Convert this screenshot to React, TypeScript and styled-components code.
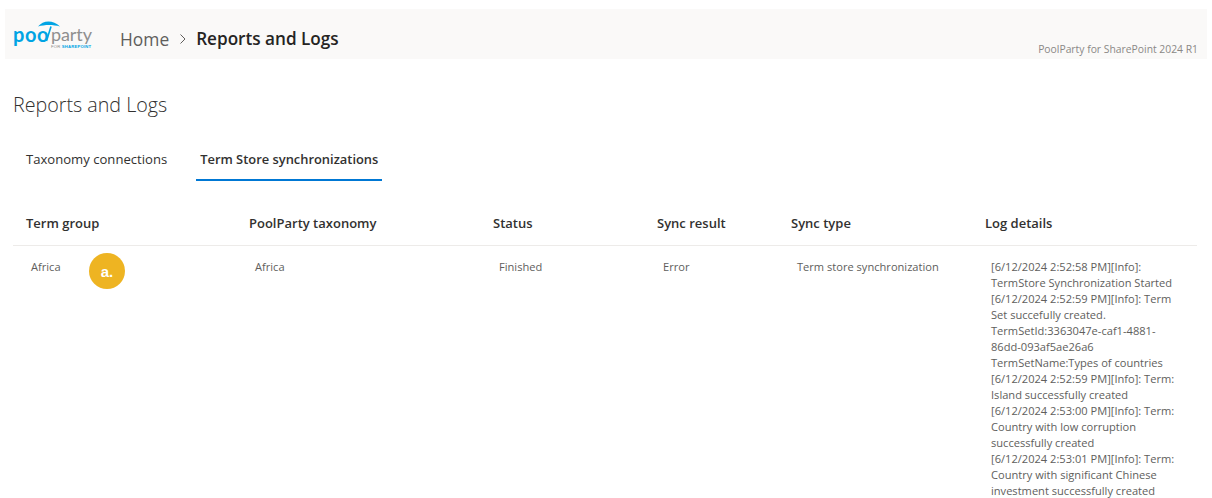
import React from "react";
import styled, { createGlobalStyle } from "styled-components";

const Global = createGlobalStyle`
  html, body { margin: 0; padding: 0; background: #fff; overflow: hidden; }
  body { font-family: "Open Sans", "Noto Sans", sans-serif; color: #323130; }
`;
const Page = styled.div`
  width: 1212px; height: 498px; overflow: hidden; padding: 9px 5px 0; box-sizing: border-box;
`;
const Header = styled.header`
  height: 50px; background: #faf9f8; display: flex; align-items: center; position: relative; padding-left: 8px;
`;
const Logo = styled.div`
  width: 78px; height: 36px; position: relative; flex: none;
`;
const LogoWord = styled.span<{ $c: string; $l: number; $s: number; $ls: number; $w: number }>`
  position: absolute; top: 8px; left: ${p => p.$l}px; font-family: "Lato", sans-serif; font-size: ${p => p.$s}px; line-height: 20px; font-weight: ${p => p.$w};
  letter-spacing: ${p => p.$ls}px; color: ${p => p.$c};
`;
const LogoSub = styled.span`
  position: absolute; top: 28px; left: 38px; font-family: "Liberation Sans", sans-serif; font-size: 4.2px; line-height: 6px; white-space: nowrap; letter-spacing: .2px; color: #8a8a8a;
  b { color: #00a4e4; }
`;
const Umbrella = styled.svg`
  position: absolute; left: 24px; top: 3px; overflow: visible;
`;
const Crumbs = styled.nav`
  display: flex; align-items: center; margin-left: 29px; font-size: 17.4px; margin-top: 9px;
`;
const Home = styled.span` color: #605e5c; `;
const Sep = styled.svg` margin: 0 9px 0 10px; `;
const Current = styled.span` color: #252423; font-weight: 600; font-size: 17.15px; `;
const Version = styled.span`
  position: absolute; right: 9px; bottom: 3px; font-size: 10.35px; color: #8a8886; line-height: 14px;
`;
const Body = styled.main` padding: 0 8px; `;
const Title = styled.h1`
  margin: 32px 0 0; font-size: 19.7px; line-height: 28px; font-weight: 300; color: #323130;
`;
const Tabs = styled.div`
  display: flex; gap: 25px; margin-top: 18px;
`;
const Tab = styled.div<{ $active?: boolean }>`
  height: 42px; line-height: 44px; padding: 0 4px 0 ${p => p.$active ? "4px" : "13px"};
  font-size: ${p => p.$active ? "12.9px" : "13.1px"}; color: #323130; font-weight: ${p => p.$active ? 600 : 400};
  border-bottom: 2px solid ${p => p.$active ? "#0078d4" : "transparent"};
`;
const Grid = styled.div`
  display: grid; grid-template-columns: 236px 244px 164px 134px 194px 212px; margin-top: 22px;
`;
const Head = styled.div<{ $first?: boolean }>`
  height: 42px; line-height: 40px; padding-left: ${p => p.$first ? "13px" : "0"}; font-size: 13px; font-weight: 600; color: #323130; border-bottom: 1px solid #edebe9;
`;
const Cell = styled.div<{ $first?: boolean }>`
  padding: 13px 6px 0 ${p => p.$first ? "18px" : "6px"}; font-size: 11.1px; line-height: 16px; color: #605e5c; position: relative; height: 240px; overflow: hidden;
`;
const Badge = styled.div`
  position: absolute; left: 76px; top: 7px; width: 36px; height: 36px; border-radius: 50%; background: #eeb422; color: #fff;
  font-family: "Liberation Sans", sans-serif; font-weight: 700; font-size: 15px; line-height: 38px; text-align: center;
`;
const Log = styled.div` width: 200px; `;

const cols = ["Term group", "PoolParty taxonomy", "Status", "Sync result", "Sync type", "Log details"];

export default function App() {
  return (
    <Page>
      <Global />
      <Header>
        <Logo>
          <Umbrella width="24" height="24" viewBox="0 0 24 24">
            <path d="M1 7.5 C6 1 16 0.5 23 7.5 C16 5.5 8 5.5 1 7.5Z" fill="#00a4e4" />
            <path d="M14 7.5 L9.5 22" stroke="#00a4e4" strokeWidth="1.6" fill="none" />
          </Umbrella>
          <LogoWord $c="#00a4e4" $l={0} $s={20} $ls={0.6} $w={700}>poo</LogoWord>
          <LogoWord $c="#8f8f8f" $l={38} $s={18} $ls={-0.1} $w={400}>party</LogoWord>
          <LogoSub>FOR <b>SHAREPOINT</b></LogoSub>
        </Logo>
        <Crumbs>
          <Home>Home</Home>
          <Sep width="8" height="12" viewBox="0 0 8 12"><path d="M1.5 1.5 6 6l-4.5 4.5" fill="none" stroke="#605e5c" strokeWidth="1" /></Sep>
          <Current>Reports and Logs</Current>
        </Crumbs>
        <Version>PoolParty for SharePoint 2024 R1</Version>
      </Header>
      <Body>
        <Title>Reports and Logs</Title>
        <Tabs>
          <Tab>Taxonomy connections</Tab>
          <Tab $active>Term Store synchronizations</Tab>
        </Tabs>
        <Grid>
          {cols.map((c, i) => <Head key={c} $first={i === 0}>{c}</Head>)}
          <Cell $first>Africa<Badge>a.</Badge></Cell>
          <Cell>Africa</Cell>
          <Cell>Finished</Cell>
          <Cell>Error</Cell>
          <Cell>Term store synchronization</Cell>
          <Cell>
            <Log>
              [6/12/2024 2:52:58 PM][Info]:<br />TermStore Synchronization Started<br />
              [6/12/2024 2:52:59 PM][Info]: Term<br />Set succefully created.<br />
              TermSetId:3363047e-caf1-4881-<br />86dd-093af5ae26a6<br />
              TermSetName:Types of countries<br />
              [6/12/2024 2:52:59 PM][Info]: Term:<br />Island successfully created<br />
              [6/12/2024 2:53:00 PM][Info]: Term:<br />Country with low corruption<br />successfully created<br />
              [6/12/2024 2:53:01 PM][Info]: Term:<br />Country with significant Chinese<br />investment successfully created
            </Log>
          </Cell>
        </Grid>
      </Body>
    </Page>
  );
}
